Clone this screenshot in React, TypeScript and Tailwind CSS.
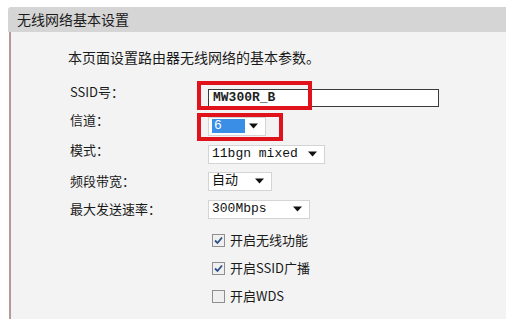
const cjk = { fontFamily: '"Noto Sans CJK SC", "Liberation Sans", sans-serif' };
const mono = { fontFamily: '"Liberation Mono", "Noto Sans CJK SC", monospace' };

function Arrow() {
  return (
    <svg width="9" height="6" viewBox="0 0 9 6" className="shrink-0">
      <path d="M0 0.5 L9 0.5 L4.5 5.5 Z" fill="#111" />
    </svg>
  );
}

function Select({ value, width, highlight }: { value: string; width: number; highlight?: boolean }) {
  return (
    <div
      className="flex h-[19px] items-center justify-between border border-[#d4d4d4] bg-white pl-[3px] pr-[7px] text-[13px] text-[#111]"
      style={{ width }}
    >
      {highlight ? (
        <span className="flex h-[14px] w-[33px] items-center bg-[#3a8ee6] pl-[2px] text-white" style={mono}>
          {value}
        </span>
      ) : (
        <span style={mono}>{value}</span>
      )}
      <Arrow />
    </div>
  );
}

function Check({ checked, label }: { checked: boolean; label: string }) {
  return (
    <div className="flex h-[28px] items-center gap-[5px]">
      <span className="flex h-[13px] w-[13px] items-center justify-center border border-[#8f8f8f] bg-[#f0f0f0]">
        {checked && (
          <svg width="9" height="9" viewBox="0 0 9 9">
            <path d="M1 4.5 L3.5 7 L8 1.5" fill="none" stroke="#2a4f8a" strokeWidth="1.8" />
          </svg>
        )}
      </span>
      <span className="text-[13px] text-[#1a1a1a]" style={cjk}>
        {label}
      </span>
    </div>
  );
}

function Row({ label, children, h, lift = 0 }: { label: string; children: React.ReactNode; h: number; lift?: number }) {
  return (
    <div className="flex items-center" style={{ height: h }}>
      <div className="w-[138px] text-[13px] text-[#1a1a1a]" style={{ ...cjk, paddingBottom: lift }}>
        {label}
      </div>
      <div className="relative flex items-center">{children}</div>
    </div>
  );
}

export default function App() {
  return (
    <div className="h-[319px] w-[506px] overflow-hidden bg-white pt-[7px]">
      <div className="ml-[8px] flex h-[25px] items-center rounded-tl-[3px] bg-[#d5d5d5] pl-[9px] text-[14px] text-[#1a1a1a]" style={cjk}>
        无线网络基本设置
      </div>
      <div className="ml-[9px] h-[300px] border-l-2 border-[#b89999] bg-[#f3f3f3] pt-[15px]">
        <p className="h-[20px] pl-[57px] text-[14px] leading-[20px] text-[#1a1a1a]" style={cjk}>
          本页面设置路由器无线网络的基本参数。
        </p>
        <div className="mt-[17px] pl-[59px]">
          <Row label="SSID号：" h={28} lift={13}>
            <div className="flex h-[18px] w-[231px] items-center border border-[#3a3a3a] bg-white pl-[4px] text-[13px] font-bold text-[#222]" style={mono}>
              MW300R_B
            </div>
            <div className="absolute left-[-11px] top-[-8px] h-[29px] w-[115px] border-4 border-[#e0121b]" />
          </Row>
          <Row label="信道：" h={28} lift={13}>
            <Select value="6" width={58} highlight />
            <div className="absolute left-[-11px] top-[-4px] h-[28px] w-[86px] border-4 border-[#e0121b]" />
          </Row>
          <Row label="模式：" h={28} lift={8}>
            <Select value="11bgn mixed" width={117} />
          </Row>
          <Row label="频段带宽：" h={26}>
            <Select value="自动" width={64} />
          </Row>
          <Row label="最大发送速率：" h={30}>
            <Select value="300Mbps" width={102} />
          </Row>
          <div className="mt-[2px] pl-[142px]">
            <Check checked label="开启无线功能" />
            <Check checked label="开启SSID广播" />
            <Check checked={false} label="开启WDS" />
          </div>
        </div>
      </div>
    </div>
  );
}
